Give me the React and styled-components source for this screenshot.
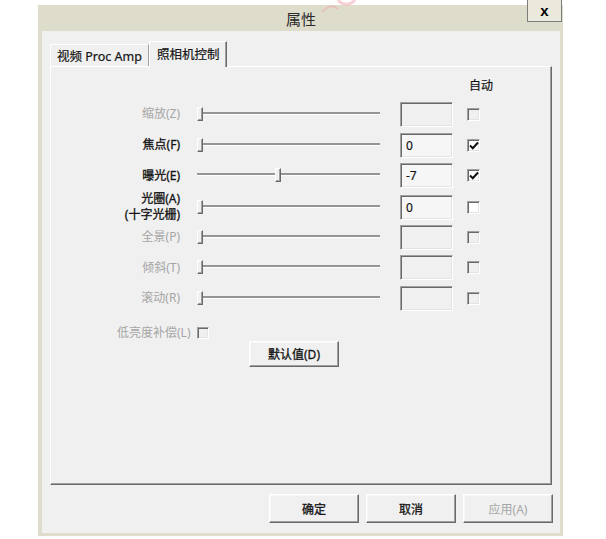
import React from 'react';
import styled, { createGlobalStyle, css } from 'styled-components';

const frameColor = '#dedcca';
const faceColor = '#f0f0f0';
const shadow = '#a0a0a0';
const darkShadow = '#696969';
const disabledText = '#a6a6a6';
const textColor = '#141414';
const uiFont = '"Noto Sans", "Noto Sans CJK SC", sans-serif';

const GlobalStyle = createGlobalStyle`
  html, body {
    margin: 0;
    padding: 0;
    background: #ffffff;
  }
  body {
    font-family: ${uiFont};
    font-size: 12px;
    color: ${textColor};
  }
  * {
    box-sizing: border-box;
  }
`;

const Page = styled.div`
  position: relative;
  width: 606px;
  height: 539px;
  padding: 5px 0 0 38px;
  overflow: hidden;
`;

const Window = styled.div`
  position: relative;
  width: 525px;
  height: 531px;
  background: ${frameColor};
  padding: 0 3px 3px 4px;
  display: flex;
  flex-direction: column;
`;

const TitleBar = styled.div`
  height: 26px;
  display: flex;
  align-items: center;
  justify-content: center;
  font-size: 15px;
  color: #2a2a2a;
`;

// faint pink scribble that sits over the title bar in the screenshot
const Watermark = styled.svg`
  position: absolute;
  top: 0;
  left: 300px;
  z-index: 2;
  opacity: 0.5;
  pointer-events: none;
`;

const CloseButton = styled.div`
  position: absolute;
  top: -5px;
  right: 1px;
  width: 35px;
  height: 22px;
  border: 1px solid #7c7c7c;
  border-top: none;
  background: #ebe9dc;
  display: flex;
  align-items: center;
  justify-content: center;
  font: bold 15px "Liberation Sans", sans-serif;
  color: #000;
`;

const Body = styled.div`
  flex: 1;
  background: ${faceColor};
  padding: 10px 8px 10px 8px;
  display: flex;
  flex-direction: column;
`;

const TabStrip = styled.div`
  height: 25px;
  display: flex;
  align-items: flex-end;
  position: relative;
  z-index: 1;
`;

const Tab = styled.div`
  height: ${p => (p.$active ? 26 : 22)}px;
  width: ${p => p.$width}px;
  margin-bottom: ${p => (p.$active ? -1 : 0)}px;
  background: ${faceColor};
  border-top: 1px solid #ffffff;
  border-left: 1px solid #ffffff;
  border-right: 1px solid ${p => (p.$active ? darkShadow : shadow)};
  box-shadow: ${p => (p.$active ? `inset -1px 0 0 ${shadow}` : 'none')};
  padding: ${p => (p.$active ? '2px 0 0 7px' : '1px 0 0 6px')};
  font-size: 12.5px;
  white-space: nowrap;
  color: ${textColor};
  -webkit-text-stroke: 0.2px ${textColor};
`;

const Panel = styled.div`
  height: 419px;
  background: ${faceColor};
  border-top: 1px solid #ffffff;
  border-left: 1px solid #ffffff;
  border-right: 1px solid ${darkShadow};
  border-bottom: 1px solid ${darkShadow};
  box-shadow: inset -1px -1px 0 ${shadow};
  padding-top: 12px;
  display: flex;
  flex-direction: column;
`;

const Grid = styled.div`
  display: grid;
  grid-template-columns: 129px 192px 53px 13px;
  column-gap: 14px;
  align-items: center;
`;

const HeaderRow = styled(Grid)`
  height: 14px;
  margin-bottom: 6px;
`;

const AutoHeading = styled.div`
  grid-column: 4;
  padding-left: 2px;
  white-space: nowrap;
  line-height: 14px;
  font-size: 12px;
  -webkit-text-stroke: 0.2px ${textColor};
`;

const Row = styled(Grid)`
  height: 30.7px;
`;

const Label = styled.div`
  text-align: right;
  line-height: 16px;
  font-size: 12px;
  color: ${p => (p.$disabled ? disabledText : textColor)};
  -webkit-text-stroke: ${p => (p.$disabled ? '0' : `0.3px ${textColor}`)};
  white-space: nowrap;
`;

const Slider = styled.div`
  position: relative;
  height: 15px;
`;

const Track = styled.div`
  position: absolute;
  left: 3px;
  right: 6px;
  top: 5px;
  height: 3px;
  border-top: 2px solid #959595;
  border-bottom: 1px solid #ffffff;
`;

const Thumb = styled.div`
  position: absolute;
  top: 0;
  width: 6px;
  height: 14px;
  background: ${faceColor};
  border-top: 1px solid #ffffff;
  border-left: 1px solid #ffffff;
  border-right: 1px solid ${darkShadow};
  border-bottom: 1px solid ${darkShadow};
  box-shadow: inset -1px -1px 0 ${shadow};
`;

const sunken = css`
  border-top: 1px solid ${shadow};
  border-left: 1px solid ${shadow};
  border-right: 1px solid #ffffff;
  border-bottom: 1px solid #ffffff;
  box-shadow: inset 1px 1px 0 ${darkShadow}, inset -1px -1px 0 #e3e3e3;
`;

const ValueBox = styled.div`
  ${sunken};
  height: 25px;
  background: ${p => (p.$disabled ? faceColor : '#f6f6f6')};
  padding: 0 5px;
  display: flex;
  align-items: center;
  font-size: 12px;
  color: ${textColor};
  -webkit-text-stroke: 0.2px ${textColor};
`;

const Check = styled.div`
  ${sunken};
  width: ${p => p.$size || 13}px;
  height: ${p => p.$size || 13}px;
  background: ${p => (p.$disabled ? faceColor : '#ffffff')};
  display: flex;
  align-items: center;
  justify-content: center;
`;

const LowLightRow = styled.div`
  display: flex;
  align-items: center;
  gap: 6px;
  height: 20px;
  margin: 9px 0 0 66px;
`;

const DefaultRow = styled.div`
  display: flex;
  padding-left: 198px;
  margin-top: -2px;
`;

const Button = styled.div`
  width: 90px;
  height: ${p => p.$height || 29}px;
  background: ${faceColor};
  border-top: 1px solid #ffffff;
  border-left: 1px solid #ffffff;
  border-right: 1px solid ${darkShadow};
  border-bottom: 1px solid ${darkShadow};
  box-shadow: inset -1px -1px 0 ${shadow}, inset 1px 1px 0 #f8f8f8;
  display: flex;
  align-items: center;
  justify-content: center;
  font-size: 12px;
  color: ${p => (p.$disabled ? disabledText : textColor)};
  -webkit-text-stroke: ${p => (p.$disabled ? '0' : `0.3px ${textColor}`)};
`;

const ButtonBar = styled.div`
  display: flex;
  justify-content: flex-end;
  gap: 7px;
  margin-top: 9px;
  margin-right: -1px;
`;

const Mark = () => (
  <svg width="10" height="9" viewBox="0 0 10 9">
    <path d="M1 4.5 L3.8 7.2 L9 1.5" fill="none" stroke="#111" strokeWidth="2" />
  </svg>
);

const controls = [
  { label: '缩放(Z)', disabled: true },
  { label: '焦点(F)', value: '0', pos: 0, auto: true },
  { label: '曝光(E)', value: '-7', pos: (-7 + 13) / 13, auto: true },
  { label: ['光圈(A)', '(十字光栅)'], value: '0', pos: 0, auto: false },
  { label: '全景(P)', disabled: true },
  { label: '倾斜(T)', disabled: true },
  { label: '滚动(R)', disabled: true },
];

const TRACK_SPAN = 168;

function ControlRow({ item }) {
  const lines = Array.isArray(item.label) ? item.label : [item.label];
  return (
    <Row>
      <Label $disabled={item.disabled}>
        {lines.map(l => (
          <div key={l}>{l}</div>
        ))}
      </Label>
      <Slider>
        <Track />
        <Thumb style={{ left: 3 + Math.round((item.pos || 0) * TRACK_SPAN) }} />
      </Slider>
      <ValueBox $disabled={item.disabled}>{item.value}</ValueBox>
      <Check $disabled={item.disabled}>{item.auto && <Mark />}</Check>
    </Row>
  );
}

export default function App() {
  return (
    <Page>
      <GlobalStyle />
      <Window>
        <TitleBar>属性</TitleBar>
        <CloseButton>x</CloseButton>
        <Body>
          <TabStrip>
            <Tab $width={99}>视频 Proc Amp</Tab>
            <Tab $width={78} $active>照相机控制</Tab>
          </TabStrip>
          <Panel>
            <HeaderRow>
              <AutoHeading>自动</AutoHeading>
            </HeaderRow>
            {controls.map((c, i) => (
              <ControlRow key={i} item={c} />
            ))}
            <LowLightRow>
              <Label $disabled>低亮度补偿(L)</Label>
              <Check $disabled $size={12} />
            </LowLightRow>
            <DefaultRow>
              <Button $height={26}>默认值(D)</Button>
            </DefaultRow>
          </Panel>
          <ButtonBar>
            <Button>确定</Button>
            <Button>取消</Button>
            <Button $disabled>应用(A)</Button>
          </ButtonBar>
        </Body>
      </Window>
      <Watermark width="60" height="14" viewBox="0 0 60 14">
        <path d="M22 12 C28 6 32 4 38 9" fill="none" stroke="#f3a3b0" strokeWidth="2" />
        <path d="M38 0 C42 5 50 6 55 0" fill="none" stroke="#f3a3b0" strokeWidth="3" />
      </Watermark>
    </Page>
  );
}
